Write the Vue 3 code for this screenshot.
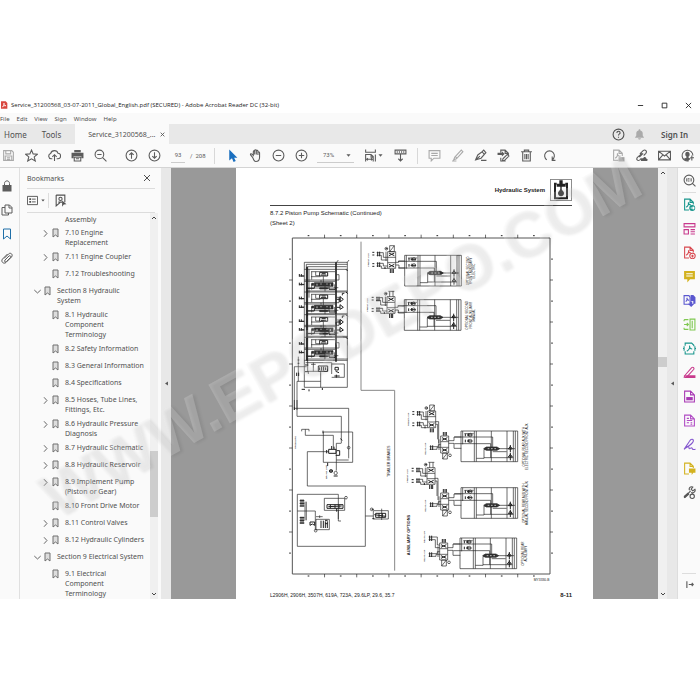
<script setup>
import { h, ref } from 'vue'

const glyphs = {
  pdf: [['f', 'M3 1h14l5 5v17H3z', '#d9473f'], ['s', 'M7 18c4-3 6-9 5-12-2 5 2 9 6 8-4-1-8 1-11 4', '#fff']],
  save: [['s', 'M3 3h15l3 3v15H3zM7 3v6h9V3M6 21v-8h12v8M9 16h6M9 19h6']],
  star: [['s', 'M12 2l3 7 8 .6-6 5 2 7.6-7-4-7 4 2-7.6-6-5L9 9z']],
  cloud: [['s', 'M8 18H6a5 5 0 01-1-9.800A7 7 0 0118.500 8 5 5 0 0118 18h-2M12 22V11M8 14.500L12 10.500l4 4']],
  print: [['f', 'M6 2h12v4H6zM1 7h22v10h-4v-4H5v4H1z'], ['s', 'M6 15h12v7H6zM9 18h6']],
  zoomOut: [['s', 'M10 2a8 8 0 100 16 8 8 0 000-16M16 16l7 7M6 10h8']],
  up: [['s', 'M12 2a10 10 0 100 20 10 10 0 000-20M12 18V7M8 11l4-4 4 4']],
  down: [['s', 'M12 2a10 10 0 100 20 10 10 0 000-20M12 6v11M8 13l4 4 4-4']],
  pointer: [['f', 'M6 1v20l5-4 3 7 4-2-3-6h6z']],
  hand: [['s', 'M7 16l-4-5c-1-2 1-3 2.500-1.500L8 12V5c0-2 2.500-2 2.500 0v5V3c0-2 3-2 3 0v7-6c0-2 3-2 3 0v7-4c0-2 3-2 3 0v8c0 5-2 8-7 8-3 0-4-2-5.500-7']],
  minus: [['s', 'M12 2a10 10 0 100 20 10 10 0 000-20M7 12h10']],
  plus: [['s', 'M12 2a10 10 0 100 20 10 10 0 000-20M7 12h10M12 7v10']],
  fit: [['s', 'M3 1v5h18V1M3 23V10h10l4 4v9M13 10v5h4M21 10v13M7 17l-2 2 2 2M13 17l2 2-2 2M5 19h10']],
  scroll: [['s', 'M2 2h20v7H2zM12 10v12M8 18l4 4 4-4'], ['f', 'M5 4h2v3H5zM9 4h2v3H9zM13 4h2v3h-2zM17 4h2v3h-2z']],
  comment: [['s', 'M2 3h20v14H11l-5 5v-5H2zM6 8h12M6 12h12']],
  pen: [['s', 'M7 15L19 2l3 3L10 18l-5 2zM2 22h8M8 14l3 3']],
  sign: [['s', 'M3 20l4-9 8-6 4 5-6 7zM3 20l8-7M15 5l3-3 4 5-3 3M13 21h10']],
  stamp: [['s', 'M7 7V2h8l6 6v3M15 2v6h6M7 16v6h9M11 18l8-8 3 3-8 8-4 1z'], ['f', 'M1 7h8V4l5 5-5 5v-3H1z']],
  trash: [['s', 'M2 5h20M8 5V2h8v3M5 6v16h14V6M9 9v10M12 9v10M15 9v10']],
  rotate: [['s', 'M7 20a9 9 0 1110 0M17 14v7h6']],
  fileSend: [['s', 'M12 21H3V2h10l6 6v5M13 2v6h6M6 17c4-3 5-6 4-9 0 4 2 6 6 5'], ['f', 'M12 15h11v8H12z']],
  link: [['s', 'M9 9l6-6c4-3 8 1 5 5l-4 4M13 8l-8 7c-4 4 0 8 4 5l3-3M8 15l7-7'], ['f', 'M11 22c-1-4 2-5 4-5 2-4 6-2 6 1 3 0 3 4 1 4z']],
  mail: [['s', 'M1 4h22v16H1zM1 4l11 9 11-9M1 20l8-9M23 20l-8-9']],
  user: [['s', 'M14 22A10 10 0 1122 12'], ['f', 'M12 5c5 0 5 8 2 9v2l4 2-5 4c-4 0-6-1-8-4l5-2v-2c-3-2-3-9 2-9zM17 15h2v-3h2v3h3v2h-3v4h-2v-4h-2z']],
  help: [['s', 'M12 2a10 10 0 100 20 10 10 0 000-20M9 9c0-4 6-4 6 0 0 2-3 2-3 5M12 16v2']],
  bell: [['f', 'M2 19l3-5V9c0-4 3-5 5-6 0-3 4-3 4 0 3 1 5 3 5 6v5l3 5zM9 20h6c0 4-6 4-6 0z']],
  lock: [['s', 'M7 11V7c0-7 10-7 10 0v4'], ['f', 'M3 10h18v13H3z']],
  pages: [['s', 'M8 2h9l5 5v11H8zM16 2v6h6M8 7H2v15h13v-4']],
  mark: [['s', 'M5 2h14v20l-7-6-7 6z']],
  clip: [['s', 'M6 13l9-9c4-4 10 1 6 6L10 21c-5 4-11-2-7-7L13 4M8 16l8-8c2-2 5 1 3 3l-8 8c-3 2-5 0-3-3']],
  options: [['s', 'M1 3h22v18H1zM11 9h8M11 15h8'], ['f', 'M5 7h4v4H5zM5 13h4v4H5z']],
  findMark: [['s', 'M4 2h16v13M4 2v20l7-6M12 6a3 3 0 100 6 3 3 0 000-6M8 15h7'], ['f', 'M15 12l8 7-5 .5-3 4z']],
  lens: [['s', 'M11 2a9 9 0 100 18 9 9 0 000-18M17 17l6 6M7 8v6M15 8v6'], ['f', 'M9 8h3v2H9zM9 12h3v2H9z']],
  exportPdf: [['s', 'M11 22H3V2h10l6 6v4M13 2v6h6M6 17c4-3 5-6 4-9 0 4 2 5 5 5'], ['f', 'M17 13a5.500 5.500 0 100 11 5.500 5.500 0 000-11'], ['s', 'M14 18.500h6M18 16l2.500 2.500L18 21', '#fff']],
  organize: [['s', 'M2 3h20v6H2zM2 14h8v8H2zM14 14h8M14 18h8M14 22h8']],
  createPdf: [['s', 'M11 22H3V2h10l6 6v4M13 2v6h6M6 17c4-3 5-6 4-9 0 4 2 5 5 5'], ['s', 'M17.500 13.500a5 5 0 100 10 5 5 0 000-10M15 18.500h5M17.500 16v5']],
  note: [['f', 'M2 2h20v15h-9l-5 6v-6H2z'], ['s', 'M6 7h12M6 11h12', '#fff']],
  combine: [['s', 'M2 3h9l2 3v13H2zM5 14c3-2 3-5 2-7 1 4 2 4 4 5'], ['f', 'M14 2h5l4 4v12h-4v-5h-5zM13 14h4v4h4l-6 6-6-6h4z']],
  compare: [['s', 'M13 2h9v20h-9zM2 3h8M2 21h8M2 3v3M2 18v3M2 12h8M7 9l3 3-3 3M17 5v14']],
  compress: [['s', 'M4 7V2h12l4 4v2M4 17v5h16v-5M7 17c5-3 6-7 5-10 0 5 3 6 5 6M2 8v8M22 8v8M0 12h3M21 12h3']],
  redact: [['s', 'M3 18L16 3c3-2 5 1 4 3L8 19zM3 18l-1 4'], ['f', 'M12 17h11v5H2l5-5z']],
  protect: [['s', 'M3 2h11l7 7v13H3zM14 2v7h7'], ['f', 'M6 13h12v6H6z']],
  form: [['s', 'M3 2h11l7 7v13H3zM14 2v7h7M7 8h4M7 12h10M7 16h4M14 16h3M14 19h3']],
  fillSign: [['s', 'M2 21L12 6c3-6 8-4 7 0-2 5-7 8-13 12M2 21c5-5 9-8 9-3 0 5 4-2 6 1 0 3 3 2 6 2']],
  review: [['s', 'M11 22H3V2h10l6 6v3M13 2v6h6'], ['f', 'M11 12h12v8h-4l-3 4v-4h-5z']],
  tools: [['s', 'M2 22L14 9M12 8c-2-4 2-8 6-6l-3 4 3 3 4-3c2 4-3 8-7 6M17 15a4 4 0 100 8 4 4 0 000-8'], ['f', 'M1 19l8-7 3 3-8 7z']],
  collapse: [['s', 'M5 3v18M10 12h12M18 8l4 4-4 4']],
  expand: [['s', 'M7 1l10 11L7 23']],
  open: [['s', 'M1 7l11 10L23 7']],
  cross: [['s', 'M3 3l18 18M21 3L3 21']],
  bar: [['s', 'M3 12h18']],
  box: [['s', 'M4 4h16v16H4z']],
  caret: [['f', 'M2 6h20L12 18z']],
  left: [['f', 'M19 2v20L5 12z']],
  chevUp: [['s', 'M4 16l8-8 8 8']],
  chevDown: [['s', 'M4 8l8 8 8-8']],
}

const Icon = (props) =>
  h(
    'svg',
    { viewBox: '0 0 24 24', class: 'icon', 'aria-hidden': 'true' },
    glyphs[props.name].map(([kind, d, color]) =>
      h('path', {
        d,
        fill: kind === 'f' ? color || 'currentColor' : 'none',
        stroke: kind === 's' ? color || 'currentColor' : 'none',
      })
    )
  )
Icon.props = ['name']

const menus = ['File', 'Edit', 'View', 'Sign', 'Window', 'Help']
const page = ref('93')
const zoom = ref('73%')

const rows = [
  { text: 'Assembly', level: 2, plain: true },
  { text: '7.10 Engine\nReplacement', level: 2, state: 'expand' },
  { text: '7.11 Engine Coupler', level: 2, state: 'expand' },
  { text: '7.12 Troubleshooting', level: 2 },
  { text: 'Section 8 Hydraulic\nSystem', level: 1, state: 'open' },
  { text: '8.1 Hydraulic\nComponent\nTerminology', level: 2 },
  { text: '8.2 Safety Information', level: 2 },
  { text: '8.3 General Information', level: 2 },
  { text: '8.4 Specifications', level: 2 },
  { text: '8.5 Hoses, Tube Lines,\nFittings, Etc.', level: 2, state: 'expand' },
  { text: '8.6 Hydraulic Pressure\nDiagnosis', level: 2, state: 'expand' },
  { text: '8.7 Hydraulic Schematic', level: 2, state: 'expand' },
  { text: '8.8 Hydraulic Reservoir', level: 2, state: 'expand' },
  { text: '8.9 Implement Pump\n(Piston or Gear)', level: 2, state: 'expand' },
  { text: '8.10 Front Drive Motor', level: 2 },
  { text: '8.11 Control Valves', level: 2, state: 'expand' },
  { text: '8.12 Hydraulic Cylinders', level: 2, state: 'expand' },
  { text: 'Section 9 Electrical System', level: 1, state: 'open' },
  { text: '9.1 Electrical\nComponent\nTerminology', level: 2 },
]

const tools = [
  ['exportPdf', 'teal', 'Export PDF'],
  ['organize', 'pink', 'Organize pages'],
  ['createPdf', 'red', 'Create PDF'],
  ['note', 'gold', 'Comment'],
  ['combine', 'indigo', 'Combine files'],
  ['compare', 'lime', 'Compare files'],
  ['compress', 'teal', 'Compress PDF'],
  ['redact', 'pink', 'Redact'],
  ['protect', 'purple', 'Protect'],
  ['form', 'violet', 'Prepare form'],
  ['fillSign', 'soft', 'Fill and sign'],
  ['review', 'gold', 'Send for comments'],
  ['tools', 'grey', 'More tools'],
]

const sections = [0, 68, 136, 204]
const columns = [0, 1, 2, 3, 4, 5, 6, 7]

const auxBoxes = [
  { x: 1214, y: 766, labels: ['OPTIONAL SECOND', 'FRONT AUXILIARY', 'ELECTRIC'] },
  { x: 1213, y: 899, labels: ['OPTIONAL SECOND', 'FRONT AUXILIARY', 'MANUAL'] },
  { x: 1383, y: 1293, labels: ['OPTIONAL REAR AUX WITH', 'ELECTRIC SECOND FRONT AUX'] },
  { x: 1383, y: 1463, labels: ['OPTIONAL REAR AUX WITH', 'MANUAL SECOND FRONT AUX'] },
  { x: 1380, y: 1614, labels: ['OPTIONAL REAR', 'AUXILIARY'] },
]
const topValves = [
  { x: 1163, y: 755, slash: true, out: true },
  { x: 1161, y: 890, slash: false, out: true },
  { x: 1283, y: 1233, slash: true, out: false },
  { x: 1281, y: 1403, slash: false, out: false },
]
const lowValves = [
  { x: 1322, y: 1308, pair: false },
  { x: 1322, y: 1479, pair: false },
  { x: 1319, y: 1629, pair: true },
]
</script>

<template>
  <div class="window">
    <header class="titlebar">
      <Icon name="pdf" class="app-icon" />
      <h1>Service_31200568_03-07-2011_Global_English.pdf (SECURED) - Adobe Acrobat Reader DC (32-bit)</h1>
      <div class="controls">
        <button aria-label="Minimize"><Icon name="bar" /></button>
        <button aria-label="Maximize"><Icon name="box" /></button>
        <button aria-label="Close"><Icon name="cross" /></button>
      </div>
    </header>
    <nav class="menubar">
      <button v-for="m in menus" :key="m">{{ m }}</button>
    </nav>
    <div class="tabs">
      <button class="home">Home</button>
      <button class="tools-tab">Tools</button>
      <div class="active">
        <span>Service_31200568_...</span>
        <button aria-label="Close tab"><Icon name="cross" /></button>
      </div>
      <div class="account">
        <button aria-label="Help"><Icon name="help" /></button>
        <button aria-label="Notifications" class="bell"><Icon name="bell" /></button>
        <button class="signin">Sign In</button>
      </div>
    </div>

    <div class="toolbar">
      <div class="group">
        <button aria-label="Save" class="dim"><Icon name="save" /></button>
        <button aria-label="Star"><Icon name="star" /></button>
        <button aria-label="Upload"><Icon name="cloud" /></button>
        <button aria-label="Print"><Icon name="print" /></button>
        <button aria-label="Find"><Icon name="zoomOut" /></button>
      </div>
      <div class="group paging">
        <button aria-label="Previous page"><Icon name="up" /></button>
        <button aria-label="Next page"><Icon name="down" /></button>
      </div>
      <input v-model="page" class="page-input" aria-label="Page number" />
      <span class="total">/&nbsp; 208</span>
      <div class="group framed">
        <button aria-label="Select" class="blue"><Icon name="pointer" /></button>
        <button aria-label="Hand"><Icon name="hand" /></button>
        <button aria-label="Zoom out"><Icon name="minus" /></button>
        <button aria-label="Zoom in"><Icon name="plus" /></button>
      </div>
      <div class="zoom-box">
        <select v-model="zoom" aria-label="Zoom level">
          <option>73%</option>
          <option>100%</option>
        </select>
        <Icon name="caret" class="caret" />
      </div>
      <button aria-label="Fit page" class="fit"><Icon name="fit" /><Icon name="caret" class="caret" /></button>
      <button aria-label="Scrolling"><Icon name="scroll" /></button>
      <div class="group framed notes">
        <button aria-label="Add comment" class="dim"><Icon name="comment" /></button>
        <button aria-label="Highlight" class="dim"><Icon name="pen" /></button>
        <button aria-label="Sign"><Icon name="sign" /></button>
        <button aria-label="Stamp"><Icon name="stamp" /></button>
        <button aria-label="Delete"><Icon name="trash" /></button>
        <button aria-label="Rotate"><Icon name="rotate" /></button>
      </div>
      <div class="group share">
        <button aria-label="Share file" class="dim"><Icon name="fileSend" /></button>
        <button aria-label="Share link"><Icon name="link" /></button>
        <button aria-label="Email"><Icon name="mail" /></button>
        <button aria-label="Account"><Icon name="user" /></button>
      </div>
    </div>

    <main class="body">
      <aside class="rail left">
        <button aria-label="Security"><Icon name="lock" /></button>
        <button aria-label="Thumbnails"><Icon name="pages" /></button>
        <button aria-label="Bookmarks" class="current"><Icon name="mark" /></button>
        <button aria-label="Attachments"><Icon name="clip" /></button>
      </aside>

      <section class="panel">
        <div class="panel-head">
          <h2>Bookmarks</h2>
          <button aria-label="Close panel"><Icon name="cross" /></button>
        </div>
        <div class="panel-tools">
          <button aria-label="Options" class="options"><Icon name="options" /><Icon name="caret" class="caret" /></button>
          <button aria-label="Find current bookmark" class="find"><Icon name="findMark" /></button>
        </div>
        <div class="tree-area">
          <ul class="tree">
            <li v-for="row in rows" :key="row.text" :class="['level-' + row.level, { plain: row.plain }]">
              <span class="twist"><Icon v-if="row.state" :name="row.state" /></span>
              <svg class="ribbon" viewBox="0 0 14 20" aria-hidden="true">
                <path v-if="!row.plain" d="M2 2h10v16l-5-4-5 4z" />
              </svg>
              <a href="#">{{ row.text }}</a>
            </li>
          </ul>
          <div class="scroll tree-scroll">
            <Icon name="chevUp" />
            <i class="thumb"></i>
            <Icon name="chevDown" />
          </div>
        </div>
      </section>

      <button class="splitter" aria-label="Collapse left panel"><Icon name="left" /></button>

      <div class="viewer">
        <article class="sheet">
          <header class="sheet-head">
            <strong>Hydraulic System</strong>
            <svg viewBox="0 0 66 66" class="tank" aria-hidden="true">
              <path d="M1 1h64v64H1z" fill="#fff" stroke="#333" stroke-width="2" />
              <path d="M12 14h8M46 14h8M15 12v46h36V12" fill="none" stroke="#222" stroke-width="6" />
              <path d="M28 4h10v10h9v9H20v-9h8zM31 22h4v8c2 6 7 7 7 13 0 12-18 12-18 0 0-6 5-7 7-13z" fill="#222" />
            </svg>
          </header>
          <p>8.7.2 Piston Pump Schematic (Continued)</p>
          <p>(Sheet 2)</p>

          <svg class="schematic" viewBox="810 684 906 1086" role="img" aria-label="Piston pump schematic">
            <g class="line">
              <path class="frame" d="M877 714H1650V1722H877z" />
              <g v-for="c in columns" :key="c">
                <path v-if="c" :d="`M${877 + c * 96.6} 704v10M${877 + c * 96.6} 1722v10M867 ${714 + c * 126}h10M1650 ${714 + c * 126}h9`" />
                <path class="bold" :d="`M${923 + c * 96.6} 707h5M${923 + c * 96.6} 1728h5M870 ${775 + c * 126}v5M1656 ${775 + c * 126}v5`" />
              </g>
              <path class="divider" d="M1083 725V1171H1184V1712" />
            </g>

            <!-- main control valve -->
            <g class="line" transform="translate(855 690)">
              <path d="M58 97h129v375H58zM64 103h123M68 110h117M64 103v288M68 110v290M72 118v85M160 90l-6 8M192 90l-6 8" />
              <path class="heavy" d="M153 97v298M66 110v282" />
              <g v-for="y in sections" :key="y" :transform="`translate(0 ${y})`">
                <path d="M58 118h129M78 125h72M80 125v24M58 150h104V134h-8M58 154h92M65 183h122M78 140h28M92 125v12h12M115 139v19M64 174h88M120 168v16M58 138h-8M58 163h-8M108 150v6M148 163v10h12M80 163v16" />
                <path class="bold" d="M104 127h24v11h-24zM110 130h12M108 135h16M64 175h24v-6M152 178h-20v-8" />
                <path class="fill" d="M88 158h56v11H88zM104 173h24v4h-24zM80 160h6v6h-6z" />
                <path class="gap" d="M96 161v6M108 160v4M126 160v4M136 161v6" />
                <path class="bold" d="M43 132v8M49 132v8M43 138h14M43 158v8M49 158v8M43 164h14M148 178l6-4M183 118l5 5M67 190v-8" />
                <path v-if="y === 68 || y === 136" class="bold" d="M155 140h10M165 132v16M165 132l10 8-10 8zM165 156v14l10-6zM155 164h10M172 128v-6h6" />
              </g>
              <path d="M58 391h129M62 398h78v34M68 398v26h40M85 398v26M78 403h14M140 402h38v40h-38M107 425v47M36 454h71M40 380v74M28 410h37M28 410v130M36 454v86M70 432v-8" />
              <path class="bold" d="M100 408h28v16h-28zM104 412v8M110 410v12M116 410v12M122 412v8M150 412h10v8h-10zM152 424l10 4M148 438h16M154 434v9M60 405h10M60 425h10M38 390h5M38 400h5M35 428v10M41 428v10M50 478h10M72 478v6M112 474v6" />
            </g>

            <!-- brake and pilot circuits -->
            <g class="line" transform="translate(855 1200)">
              <path d="M28 0v25h163v150M36 0v49h133v80M50 94v-6h22v6M61 88v18h84v40M115 96h88v91h-88zM67 155h64M67 155v103h174v181H37V283h123v80h8M154 130v82M191 180h-37M154 130h15M37 333h54v58M60 305v56M64 305v56M118 295h61v36h-61zM93 358h40v31H93zM241 348h24M265 332h45v25h-45zM160 331v26M93 350h20M104 346v8M290 326v34" />
              <path class="bold" d="M131 148h22v12h-22zM140 138v10M147 140v8M156 152h8v14h-12M125 150v10M166 116l6 5M28 30v-8M114 100v-8M128 188v10M134 210h8v6h-8zM146 228h12M120 361h8M75 366h14v10l-7-4-7 4zM108 362v22M115 362v22M121 364v20M127 364v20M48 298v22M54 298v22M44 302h14M44 310h14M44 318h14M48 350v22M54 350v22M44 353h14M44 361h14M44 369h14M126 314h48v11h-48zM136 314v11M150 314v11M162 314v11M130 320l40-2M155 325v10M272 340h30v12h-30zM282 340v12M292 340v12M260 328h6M262 356h6M268 344l34 5M120 371h8" />
              <circle cx="191" cy="143" r="4" /><circle cx="152" cy="219" r="5" /><circle cx="92" cy="392" r="4" />
              <circle cx="183" cy="293" r="4" /><circle cx="260" cy="328" r="4" /><circle cx="138" cy="213" r="4" />
            </g>

            <!-- auxiliary valve blocks -->
            <g v-for="b in auxBoxes" :key="b.y" class="line" :transform="`translate(${b.x} ${b.y})`">
              <path d="M0 0h170v92H0zM40 0v92M46 0v92M91 0v92M138 0v92M157 0v92M163 0v92M-20 18H95v30M-20 38H89V80M46 82H69V55h20M95 62h42M69 80h88M108 53h54M5 0v40M10 8h28" />
              <path class="fill" d="M68 53l8-5h32l8 5-8 5H76z" />
              <path class="gap" d="M80 53h5M90 53h5M100 53h5" />
              <path class="bold" d="M13 8v8M13 26v8M18 12h16M18 30h16M22 7v9M22 25v9M148 42v22M148 66v22M142 54h12l-6-8zM142 78h12l-6-8z" />
              <circle cx="28" cy="12" r="5" /><circle cx="28" cy="30" r="5" />
              <text v-for="(t, i) in b.labels" :key="t" class="tag" :transform="`translate(${192 + i * 10} 47) rotate(-90)`">{{ t }}</text>
            </g>
            <g v-for="v in topValves" :key="v.y" class="line" :transform="`translate(${v.x} ${v.y})`">
              <path d="M0 0h24v50H0zM0 17h24M0 33h24M-33 3h20v14h13M-33 11h14v14h19M-33 35h20v8h13M-33 43h14v7h19M-5 0v28" />
              <path v-if="v.slash" d="M6 0v-18h14V0zM6 0l14-18" />
              <path v-else d="M8 0v-16M18 0v-16M4 -16h18" />
              <path v-if="v.out" d="M24 32h9v-4h18M24 40h10v9h17" />
              <path v-else d="M24 32h9v65M24 40h6v45" />
              <path class="bold" d="M4 4l16 8M4 12l16-8M4 38l16 8M4 46l16-8M8 52v12M13 52v12M17 52v12M-30 0v14M-24 0v14M-30 32v14M-24 32v14M-46 2h6M-46 10h6M-46 36h6M-46 44h6M-6 -9h6M-8 46v6" />
              <circle cx="-4" cy="-9" r="4" />
              <text class="mini" transform="translate(-57 25) rotate(-90)">FRONT AUX</text>
            </g>
            <g v-for="v in lowValves" :key="v.y" class="line" :transform="`translate(${v.x} ${v.y})`">
              <path d="M0 0h24v51H0zM0 17h24M0 34h24M6 51v18h14V51zM6 69l14-18M-33 32h26v-6h7M-33 40h22v-6h11M24 14h16v-11h22M24 22h16v15h22M-5 10v32" />
              <path v-if="v.pair" d="M-33-18h26v24h7M-33-10h20v24h13" />
              <path class="bold" d="M4 5l16 8M4 13l16-8M4 38l16 8M4 46l16-8M8-12v11M13-12v11M17-12v11M-30 28v14M-24 28v14" />
              <path v-if="v.pair" class="bold" d="M-30 -22v16M-24 -22v16" />
              <circle cx="28" cy="58" r="4" />
              <text class="mini" transform="translate(-44 38) rotate(-90)">REAR AUX</text>
              <text v-if="v.pair" class="mini" transform="translate(-44 -18) rotate(-90)">REAR AUX</text>
            </g>

            <text class="note" transform="translate(1169 1384) rotate(-90)">TRAILER BRAKES</text>
            <text class="title" transform="translate(1230 1605) rotate(-90)">AUXILIARY OPTIONS</text>
            <text class="mini" transform="translate(887 1328) rotate(-90)">PRESSURE</text>
            <text class="mini" transform="translate(980 1416) rotate(-90)">BRAKE LINE</text>
            <text class="code" x="1625" y="1744">MY3330-B</text>
          </svg>

          <footer class="sheet-foot">
            <span>L2906H, 2906H, 3507H, 619A, 723A, 29.6LP, 29.6, 35.7</span>
            <strong>8-11</strong>
          </footer>
        </article>
      </div>

      <div class="scroll page-scroll">
        <Icon name="chevUp" />
        <i class="thumb"></i>
        <Icon name="chevDown" />
      </div>
      <button class="splitter" aria-label="Collapse tools"><Icon name="left" /></button>

      <aside class="rail right">
        <button aria-label="Search tools" class="lens"><Icon name="lens" /></button>
        <button v-for="[name, tone, label] in tools" :key="label" :aria-label="label" :class="tone">
          <Icon :name="name" />
        </button>
        <button aria-label="Hide tools" class="hide"><Icon name="collapse" /></button>
      </aside>
    </main>

    <div class="watermark" aria-hidden="true"><span>WWW.EPCDEPO.COM</span></div>
  </div>
</template>

<style>
body {
  background: #fff;
  overflow: hidden;
}
</style>

<style scoped>
.window {
  position: relative;
  box-sizing: border-box;
  min-height: 100vh;
  padding: 97px 0 101px;
  display: flex;
  flex-direction: column;
  overflow: hidden;
  font-family: "Noto Sans", "Open Sans", sans-serif;
  color: #505050;
}
h1, h2, p, ul { margin: 0; padding: 0; font-weight: 400; }
button {
  display: flex;
  align-items: center;
  justify-content: center;
  padding: 0;
  border: 0;
  background: none;
  color: inherit;
  font: inherit;
}
.icon { display: block; width: 100%; height: auto; flex: none; stroke-width: 2; }
.caret { width: 5px; height: 5px; }

.titlebar { display: flex; align-items: center; height: 16px; color: #222; }
.titlebar .app-icon { width: 8px; margin-right: 3px; }
.titlebar h1 { font-size: 6px; line-height: 16px; white-space: nowrap; font-family: "Open Sans", sans-serif; }
.controls { display: flex; gap: 17px; margin-left: auto; padding-right: 8px; }
.controls button { width: 7px; }
.controls .icon { stroke-width: 3; }
.menubar { display: flex; gap: 7px; height: 11px; background: #fafafa; font-size: 6px; }
.tabs {
  display: flex;
  height: 20px;
  background: #e8e8e8;
  font-size: 8px;
}
.home { padding: 0 15px 0 4px; }
.tools-tab { padding-right: 14px; }
.active { display: flex; align-items: center; gap: 5px; padding: 0 4px 0 13px; background: #fafafa; font-size: 7px; }
.active button { width: 5px; }
.active .icon { stroke-width: 4; }
.account { display: flex; align-items: center; margin-left: auto; padding-right: 12px; }
.account button { width: 13px; }
.account .bell { width: 11px; margin: 0 16px 0 9px; color: #aaa; }
.account .signin { width: auto; font-size: 8px; font-weight: 600; }

.toolbar {
  display: flex;
  align-items: center;
  height: 23px;
  padding: 0 6px 0 1px;
  border-bottom: 1px solid #d4d4d4;
  background: #fafafa;
  color: #5c5c5c;
}
.toolbar button { width: 14px; flex: none; }
.toolbar .icon { width: 13px; }
.toolbar .caret { width: 5px; }
.group { display: flex; gap: 9px; }
.toolbar .dim { color: #aaa; }
.toolbar .blue { color: #1a6fbf; }
.paging { margin: 0 10px 0 17px; }
.page-input {
  width: 14px;
  box-sizing: border-box;
  padding: 2px 0;
  border: 0;
  border-bottom: 1px solid #ccc;
  background: none;
  color: inherit;
  font: 6px/10px Roboto, sans-serif;
  text-align: center;
}
.total { width: 19px; padding-left: 5px; font: 6px/10px Roboto, sans-serif; white-space: nowrap; }
.framed { margin-left: 5px; padding-left: 10px; border-left: 1px solid #d8d8d8; align-items: center; height: 16px; }
.zoom-box { display: flex; align-items: center; width: 37px; margin: 0 9px; border-bottom: 1px solid #ccc; }
.zoom-box select {
  appearance: none;
  width: 29px;
  padding: 2px 0 2px 6px;
  border: 0;
  background: none;
  color: inherit;
  font: 6px/10px Roboto, sans-serif;
}
.toolbar .fit { width: 20px; margin-right: 10px; gap: 1px; }
.notes { margin-left: 10px; padding-left: 9px; }
.share { margin-left: auto; }

.body { display: flex; flex: 1; background: #fafafa; }
.rail { display: flex; flex-direction: column; align-items: center; box-sizing: border-box; }
.left { width: 20px; padding: 12px 5px 0 0; gap: 13px; border-right: 1px solid #e0e0e0; color: #5c5c5c; }
.left button { width: 12px; height: 11px; }
.left .current { color: #1f6fa8; }
.panel { width: 141px; display: flex; flex-direction: column; flex: none; }
.panel-head {
  display: flex;
  align-items: center;
  justify-content: space-between;
  height: 20px;
  margin: 0 6px 0 7px;
  padding-right: 4px;
  border-bottom: 1px solid #dcdcdc;
}
.panel-head h2 { font-size: 7px; }
.panel-head button { width: 8px; }
.panel-head .icon { stroke-width: 3; }
.panel-tools { display: flex; align-items: center; height: 23px; margin: 0 6px 0 7px; border-bottom: 1px solid #dcdcdc; }
.options { width: 22px; gap: 3px; padding-right: 4px; height: 15px; border-right: 1px solid #ddd; justify-content: flex-start; }
.options .icon { width: 11px; }
.options .caret { width: 4px; }
.find { width: 13px; margin-left: 5px; }
.tree-area { display: flex; flex: 1; justify-content: space-between; contain: size; overflow: hidden; }
.tree { list-style: none; width: 130px; font-size: 7px; line-height: 10px; }
.tree li { display: flex; align-items: flex-start; min-height: 13px; padding: 2px 0; }
.tree li.plain { min-height: 11px; padding-bottom: 0; }
.tree .level-2 { padding-left: 22px; }
.tree .level-1 { padding-left: 14px; }
.tree a { color: inherit; text-decoration: none; white-space: pre; }
.twist { width: 7px; flex: none; margin: 2px 3px 0 0; }
.twist .icon { stroke-width: 3; }
.ribbon { width: 7px; height: 10px; flex: none; margin-right: 6px; fill: #ddd; stroke: #707070; stroke-width: 2; }
.scroll { display: flex; flex-direction: column; align-items: center; background: #f0f0f0; color: #444; }
.scroll .icon { width: 6px; margin: 2px 0; stroke-width: 4; }
.thumb { width: 100%; background: #cdcdcd; }
.tree-scroll { width: 8px; margin-right: 3px; }
.tree-scroll .thumb { height: 17%; margin: auto 0 72px; }
.page-scroll { width: 9px; }
.page-scroll .thumb { height: 10px; margin: 179px 0 auto; }
.splitter { width: 10px; flex: none; background: #e8e8e8; color: #555; }
.splitter .icon { width: 5px; }

.viewer { flex: 1; display: flex; padding: 0 65px; background: #999; min-width: 0; }
.sheet {
  flex: 1;
  min-width: 0;
  padding: 11px 21px 0 34px;
  background: #fff;
  color: #222;
  font: 6px/10px "Liberation Sans", Arial, sans-serif;
}
.sheet-head {
  display: flex;
  align-items: center;
  justify-content: flex-end;
  gap: 5px;
  margin-bottom: 2px;
  padding-bottom: 4px;
  border-bottom: 1px solid #444;
}
.tank { width: 22px; height: 22px; }
.schematic { display: block; width: 100%; height: auto; }
.sheet-foot { display: flex; justify-content: space-between; margin-top: 2px; font-size: 5px; line-height: 7px; }
.sheet-foot strong { font-size: 6px; }

.line { fill: none; stroke: #222; stroke-width: 2; }
.frame { stroke: #555; stroke-width: 3; }
.divider { stroke: #888; stroke-width: 3; }
.bold { stroke: #222; stroke-width: 3; }
.heavy { stroke: #222; stroke-width: 5; }
.fill { fill: #333; stroke: #222; }
.gap { stroke: #fff; stroke-width: 2; }
.schematic text { fill: #222; stroke: none; font-weight: 700; }
.schematic .tag { font-size: 9px; font-weight: 400; text-anchor: middle; }
.mini { font-size: 7px; text-anchor: middle; }
.schematic .note { font-size: 11px; font-weight: 400; text-anchor: middle; }
.title { font-size: 12px; text-anchor: middle; }
.schematic .code { font-size: 10px; font-weight: 400; text-anchor: middle; }

.right { width: 23px; padding: 6px 0 4px; gap: 12px; border-left: 1px solid #ddd; color: #5c5c5c; }
.right button { width: 13px; height: 12px; }
.right .lens { position: relative; }
.right .lens::after {
  content: "";
  position: absolute;
  top: 18px;
  left: -1px;
  width: 14px;
  border-top: 1px solid #ddd;
}
.right .hide { width: 14px; height: 22px; margin-top: auto; border-top: 1px solid #ddd; }
.right .hide .icon { width: 9px; stroke-width: 3; }
.teal { color: #17958c; }
.pink { color: #c8398c; }
.red { color: #d8484f; }
.gold { color: #d3b21f; }
.indigo { color: #5a57cf; }
.soft { color: #8558cf; }
.lime { color: #7fc850; }
.purple { color: #a838b4; }
.violet { color: #b04bc4; }
.grey { color: #555; }

.watermark {
  position: absolute;
  inset: 0;
  display: flex;
  align-items: center;
  justify-content: center;
  padding: 0 20px 26px 0;
  pointer-events: none;
}
.watermark span {
  font: 700 64px/1 "Liberation Sans", Arial, sans-serif;
  color: rgba(240, 240, 240, 0.22);
  text-shadow: 2px 2px 3px rgba(0, 0, 0, 0.08);
  transform: rotate(-29deg);
  white-space: nowrap;
}
</style>
